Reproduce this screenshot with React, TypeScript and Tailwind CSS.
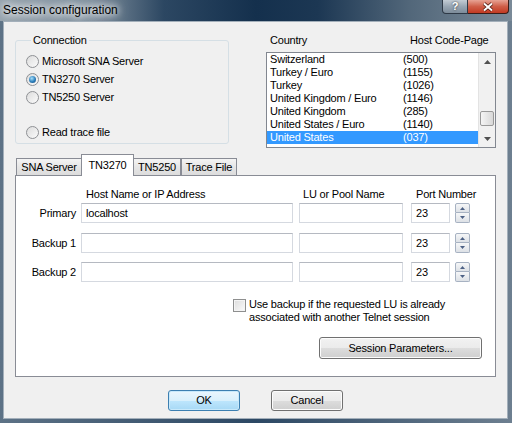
import React from "react";

const countries = [
  ["Switzerland", "(500)"],
  ["Turkey / Euro", "(1155)"],
  ["Turkey", "(1026)"],
  ["United Kingdom / Euro", "(1146)"],
  ["United Kingdom", "(285)"],
  ["United States / Euro", "(1140)"],
  ["United States", "(037)"],
];

function Radio({ label, checked }: { label: string; checked?: boolean }) {
  return (
    <div className="flex h-[18px] items-center gap-[3px]">
      <div className="flex h-[13px] w-[13px] items-center justify-center rounded-full border border-[#8e9094] bg-gradient-to-br from-[#dcdcdc] to-[#fbfbfb]">
        {checked && (
          <div className="h-[7px] w-[7px] rounded-full bg-[radial-gradient(circle_at_40%_35%,#a6e0fb,#2b7dba_55%,#1a4a78)]" />
        )}
      </div>
      <span>{label}</span>
    </div>
  );
}

function ScrollArrow({ up }: { up?: boolean }) {
  return (
    <div className="flex h-[17px] items-center justify-center">
      <svg width="7" height="4" viewBox="0 0 7 4">
        <path d={up ? "M0 4L3.5 0L7 4Z" : "M0 0L3.5 4L7 0Z"} fill="#505050" />
      </svg>
    </div>
  );
}

function Spinner() {
  return (
    <div className="ml-[5px] flex h-[20px] w-[15px] flex-col">
      <div className="flex h-[10px] items-center justify-center rounded-t-[2px] border border-[#a7b2c2] bg-gradient-to-b from-[#f6f7f8] to-[#dde1e6]">
        <svg width="5" height="3" viewBox="0 0 5 3">
          <path d="M0 3L2.5 0L5 3Z" fill="#4d6185" />
        </svg>
      </div>
      <div className="flex h-[10px] items-center justify-center rounded-b-[2px] border border-t-0 border-[#a7b2c2] bg-gradient-to-b from-[#f6f7f8] to-[#dde1e6]">
        <svg width="5" height="3" viewBox="0 0 5 3">
          <path d="M0 0L2.5 3L5 0Z" fill="#4d6185" />
        </svg>
      </div>
    </div>
  );
}

function Row({ label, host }: { label: string; host?: string }) {
  return (
    <div className="flex h-[20px] items-center">
      <div className="w-[60px] text-right">{label}</div>
      <div className="ml-[5px] flex h-[20px] w-[212px] items-center border border-[#d5d9e0] border-t-[#b5b9c1] pl-[4px]">
        {host}
      </div>
      <div className="ml-[6px] h-[20px] w-[104px] border border-[#d5d9e0] border-t-[#b5b9c1]" />
      <div className="ml-[8px] flex h-[20px] w-[39px] items-center border border-[#d5d9e0] border-t-[#b5b9c1] pl-[4px]">
        23
      </div>
      <Spinner />
    </div>
  );
}

const btn =
  "flex items-center justify-center rounded-[3px] border border-[#707070] bg-[linear-gradient(#f2f2f2,#ebebeb_50%,#dddddd_50%,#cfcfcf)] shadow-[inset_0_0_0_1px_#fcfcfc]";

export default function App() {
  return (
    <div className="flex h-[423px] w-[512px] flex-col overflow-hidden bg-[linear-gradient(90deg,#5d7286,#2c4864_50%,#6d7f90)] font-['Liberation_Sans',Arial,sans-serif] text-[11px] leading-[13px] text-black">
      {/* Title bar */}
      <div className="flex h-[21px] items-start justify-between bg-[linear-gradient(90deg,#95a2ad,#7f8f9d_18%,#2c4762_32%,#14304d_50%,#1c3753_62%,#52677a_80%,#7a8a98)]">
        <div className="pl-[3px] pt-[3px] text-[12px] leading-[14px] [text-shadow:0_0_6px_#fff,0_0_10px_#fff,0_0_14px_#fff]">
          Session configuration
        </div>
        <div className="mr-[3px] flex">
          <div className="flex h-[14px] w-[26px] items-center justify-center rounded-bl-[4px] border border-t-0 border-[#2e3946] bg-[linear-gradient(#c3ccd4,#98a6b3_50%,#7d8c9a)] text-[11px] font-bold text-white [text-shadow:0_0_2px_#222]">
            ?
          </div>
          <div className="flex h-[14px] w-[41px] items-center justify-center rounded-br-[4px] border border-l-0 border-t-0 border-[#3a1d18] bg-[linear-gradient(#e7a394,#cf5e48_50%,#c23a22)]">
            <svg width="12" height="10" viewBox="0 0 12 10">
              <path d="M2 1.5L10 8.5M10 1.5L2 8.5" stroke="#4a1810" strokeWidth="3.6" />
              <path d="M2 1.5L10 8.5M10 1.5L2 8.5" stroke="#fff" strokeWidth="2" />
            </svg>
          </div>
        </div>
      </div>

      {/* Client area */}
      <div className="mx-[3px] flex h-[398px] w-[505px] flex-col border border-[#a3afba] bg-[#f0f0f0] tracking-[-0.2px]">
        <div className="flex pl-[11px] pt-[12px]">
          <fieldset className="w-[214px] self-start rounded-[3px] border border-[#d5dfe5] pb-[2px] pl-[10px]">
            <legend className="ml-[5px] px-[2px]">Connection</legend>
            <div className="pt-[5px]">
              <Radio label="Microsoft SNA Server" />
              <Radio label="TN3270 Server" checked />
              <Radio label="TN5250 Server" />
              <div className="mt-[17px]">
                <Radio label="Read trace file" />
              </div>
            </div>
          </fieldset>

          <div className="ml-[37px] w-[230px]">
            <div className="flex h-[13px]">
              <span className="w-[144px] pl-[4px]">Country</span>
              <span>Host Code-Page</span>
            </div>
            <div className="mt-[5px] flex h-[96px] border border-[#828790] bg-white">
              <div className="w-[211px]">
                {countries.map(([name, code], i) => (
                  <div
                    key={name}
                    className={
                      i === countries.length - 1
                        ? "flex h-[13px] bg-[#3399ff] pl-[3px] text-white"
                        : "flex h-[13px] pl-[3px]"
                    }
                  >
                    <span className="w-[133px]">{name}</span>
                    <span>{code}</span>
                  </div>
                ))}
              </div>
              <div className="flex w-[17px] flex-col border-l border-[#e3e3e3] bg-[#f1f1f1]">
                <ScrollArrow up />
                <div className="flex-1 pt-[41px]">
                  <div className="mx-[1px] h-[15px] rounded-[2px] border border-[#999999] bg-gradient-to-r from-[#f5f5f5] to-[#d8d8d8]" />
                </div>
                <ScrollArrow />
              </div>
            </div>
          </div>
        </div>

        {/* Tabs */}
        <div className="ml-[11px] mt-[6px] flex h-[21px] items-end pl-[1px]">
          <div className="flex h-[17px] w-[66px] items-center justify-center border border-b-0 border-[#898c95] bg-[linear-gradient(#f4f4f4,#e6e6e6_50%,#dcdcdc)]">
            SNA Server
          </div>
          <div className="relative z-10 -mb-[1px] -ml-[1px] flex h-[22px] w-[53px] items-start justify-center border border-b-0 border-[#898c95] bg-white pt-[4px]">
            TN3270
          </div>
          <div className="-ml-[1px] flex h-[17px] w-[48px] items-center justify-center border border-b-0 border-[#898c95] bg-[linear-gradient(#f4f4f4,#e6e6e6_50%,#dcdcdc)]">
            TN5250
          </div>
          <div className="flex h-[17px] w-[56px] items-center justify-center border border-b-0 border-[#898c95] bg-[linear-gradient(#f4f4f4,#e6e6e6_50%,#dcdcdc)]">
            Trace File
          </div>
        </div>

        <div className="ml-[11px] flex h-[202px] w-[481px] flex-col border border-[#898c95] bg-white">
          <div className="mt-[12px] flex h-[13px] whitespace-nowrap">
            <span className="w-[287px] pl-[70px]">Host Name or IP Address</span>
            <span className="w-[113px]">LU or Pool Name</span>
            <span>Port Number</span>
          </div>
          <div className="mt-[2px]">
            <Row label="Primary" host="localhost" />
          </div>
          <div className="mt-[10px]">
            <Row label="Backup 1" />
          </div>
          <div className="mt-[9px]">
            <Row label="Backup 2" />
          </div>

          <div className="mt-[16px] flex items-start pl-[217px]">
            <div className="mt-[1px] h-[13px] w-[13px] border border-[#8e8f8f] bg-[linear-gradient(135deg,#dcdcdc,#fbfbfb)] shadow-[inset_0_0_0_1px_#f4f4f4]" />
            <div className="ml-[3px]">
              Use backup if the requested LU is already
              <br />
              associated with another Telnet session
            </div>
          </div>

          <div className={`${btn} mr-[13px] mt-[13px] h-[22px] w-[163px] self-end`}>
            Session Parameters...
          </div>
        </div>

        {/* Dialog buttons */}
        <div className="mt-[13px] flex justify-center gap-[31px]">
          <div className="flex h-[21px] w-[72px] items-center justify-center rounded-[3px] border border-[#3c7fb1] bg-[linear-gradient(#eaf6fd,#d9f0fc_50%,#bee6fd_50%,#a7d9f5)] shadow-[inset_0_0_0_1px_#c8e9fb]">
            OK
          </div>
          <div className={`${btn} h-[21px] w-[72px]`}>Cancel</div>
        </div>
      </div>
    </div>
  );
}
